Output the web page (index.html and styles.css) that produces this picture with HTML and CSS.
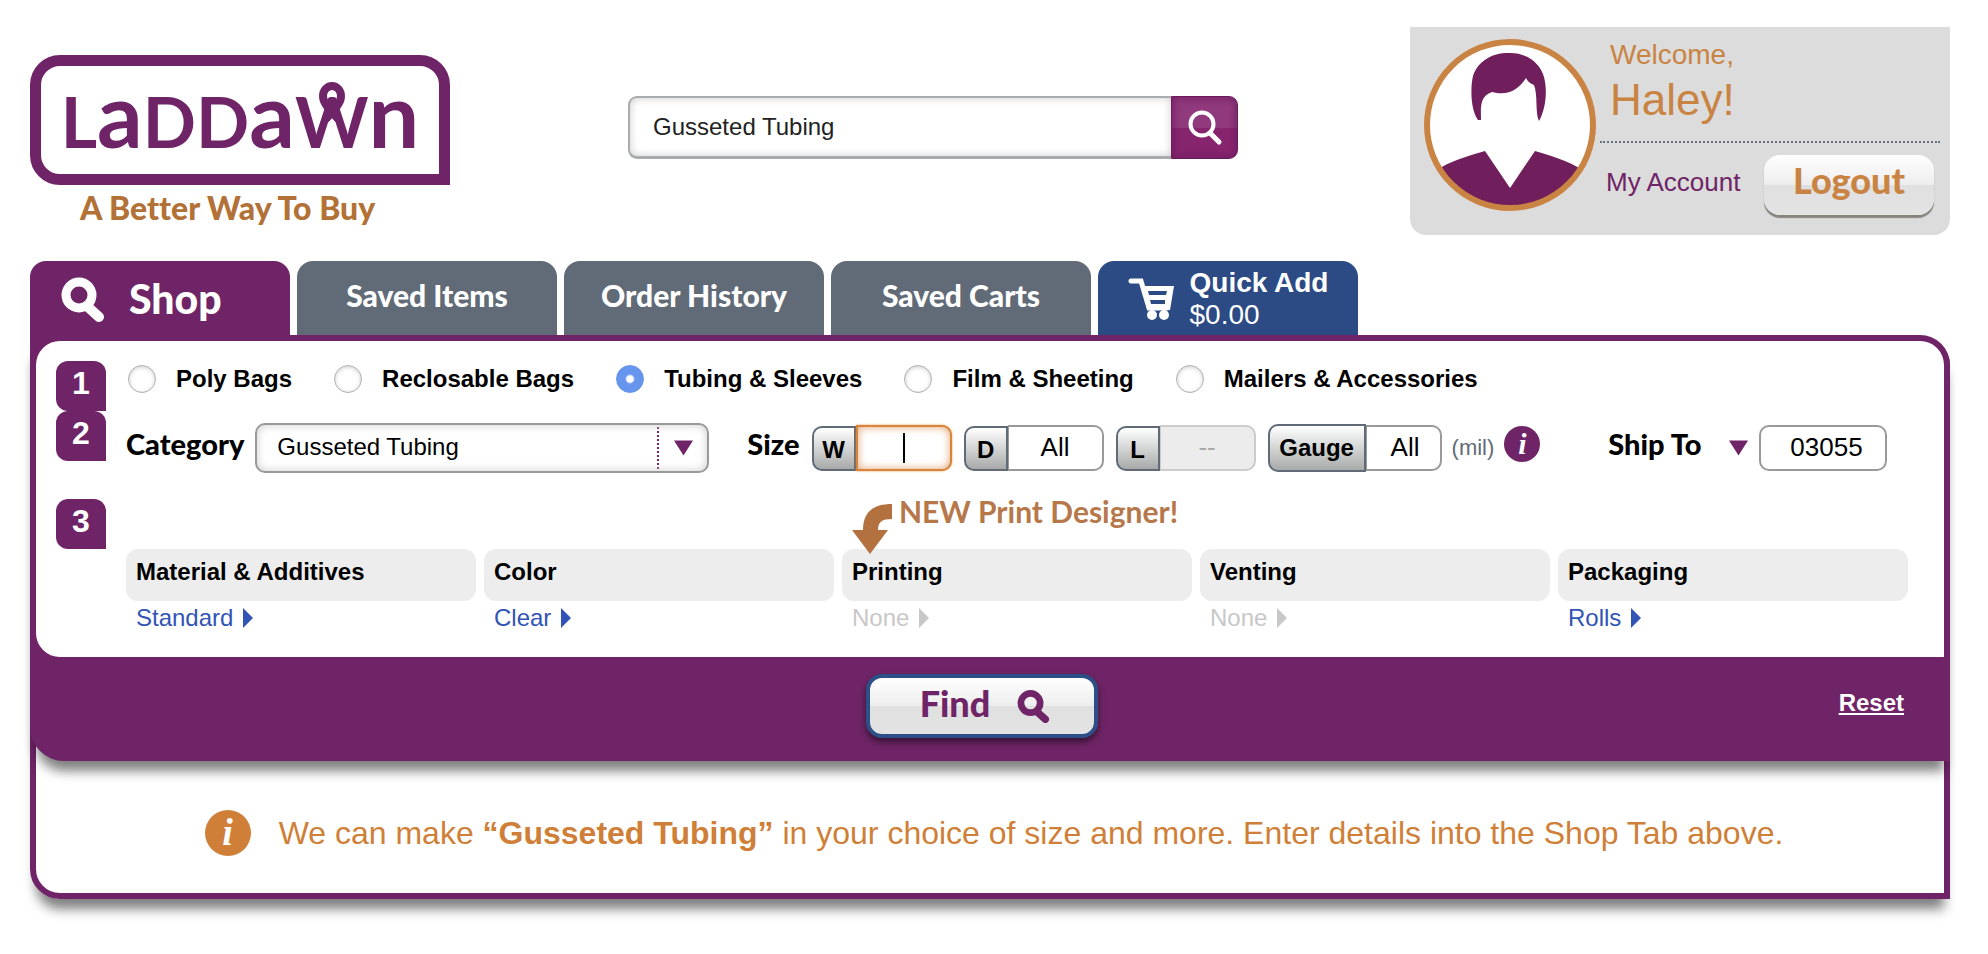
FILE: index.html
```html
<!DOCTYPE html>
<html lang="en">
<head>
<meta charset="utf-8">
<title>Laddawn - Shop</title>
<link rel="stylesheet" href="styles.css">
</head>
<body>
<svg class="defs" aria-hidden="true">
  <symbol id="glass" viewBox="0 0 44 46">
    <circle cx="18" cy="19" r="13" fill="none" stroke="currentColor" stroke-width="9"/>
    <path d="M27 31 L38 41" stroke="currentColor" stroke-width="10" stroke-linecap="round"/>
  </symbol>
  <symbol id="down" viewBox="0 0 20 16"><path d="M0 0H20L10 16Z" fill="currentColor"/></symbol>
  <symbol id="right" viewBox="0 0 10 20"><path d="M0 0L10 10L0 20Z" fill="currentColor"/></symbol>
</svg>

<header class="header">
  <div class="brand">
    <a class="logo" href="#" aria-label="Laddawn home">
      <span class="word">L<span class="low">a</span>DD<span class="low">a</span><span class="loop-letter">W<svg class="loop" viewBox="0 0 28 40"><path d="M7 38 C20 24 23 20 23 14 A9 10 0 0 0 5 14 C5 20 8 24 21 38" fill="none" stroke="currentColor" stroke-width="8"/></svg></span><span class="low">n</span></span>
    </a>
    <p class="tagline">A Better Way To Buy</p>
  </div>
  <form class="search">
    <input class="search-input" type="text" value="Gusseted Tubing" aria-label="Search">
    <button class="search-button" type="button" aria-label="Search">
      <svg viewBox="0 0 36 36" width="36" height="36"><circle cx="15" cy="14" r="11.500" fill="none" stroke="#fff" stroke-width="4"/><path d="M23 23L32 32" stroke="#fff" stroke-width="5" stroke-linecap="round"/></svg>
    </button>
  </form>
  <section class="user">
    <svg class="avatar" viewBox="0 0 172 172">
      <circle cx="86" cy="86" r="83" fill="#fff"/>
      <clipPath id="face"><circle cx="86" cy="86" r="81"/></clipPath>
      <path clip-path="url(#face)" fill="#701f5c" d="M14 131 Q22 123 61 112 L86 149 L111 112 Q146 122 158 131 V172 H14Z"/>
      <path fill="#701f5c" d="M54 81 C47 72 46 50 49 37 C54 22 68 14 84 14 C101 13 116 23 120 38 C124 54 121 71 115 82 C111 74 114 56 110 46 C106 44 104 43 102 39 C94 51 84 57 68 53 C55 57 57 70 57 81Z"/>
      <circle cx="86" cy="86" r="83" fill="none" stroke="#c98444" stroke-width="6"/>
    </svg>
    <div class="user-info">
      <p class="welcome">Welcome,</p>
      <p class="name">Haley!</p>
      <div class="user-actions">
        <a class="account" href="#">My Account</a>
        <button class="logout" type="button">Logout</button>
      </div>
    </div>
  </section>
</header>

<nav class="tabs">
  <a class="tab tab-shop" href="#"><svg class="shop-icon"><use href="#glass"/></svg>Shop</a>
  <a class="tab" href="#">Saved Items</a>
  <a class="tab" href="#">Order History</a>
  <a class="tab" href="#">Saved Carts</a>
  <a class="tab tab-cart" href="#">
    <svg viewBox="0 0 46 42" width="46" height="42"><path d="M3 3H13L21 30H39" fill="none" stroke="#fff" stroke-width="5" stroke-linecap="round"/><path fill="#fff" fill-rule="evenodd" d="M13 8H46L42 32H20ZM20 13L21 17H38L39 13ZM22 22L23 26H37V22Z"/><circle cx="24" cy="37" r="5" fill="#fff"/><circle cx="36" cy="37" r="5" fill="#fff"/></svg>
    <span class="cart-text"><b>Quick Add</b><span>$0.00</span></span>
  </a>
</nav>

<main class="shell">
  <form class="shop">
    <div class="steps">
      <div class="step">
        <span class="badge">1</span>
        <div class="kinds">
          <label class="kind"><input type="radio" name="kind">Poly Bags</label>
          <label class="kind"><input type="radio" name="kind">Reclosable Bags</label>
          <label class="kind"><input type="radio" name="kind" checked>Tubing &amp; Sleeves</label>
          <label class="kind"><input type="radio" name="kind">Film &amp; Sheeting</label>
          <label class="kind"><input type="radio" name="kind">Mailers &amp; Accessories</label>
        </div>
      </div>
      <div class="step step-size">
        <span class="badge">2</span>
        <div class="fields">
          <label class="title" for="category">Category</label>
          <div class="select">
            <select id="category"><option>Gusseted Tubing</option></select>
            <svg class="arrow"><use href="#down"/></svg>
          </div>
          <span class="title title-size">Size</span>
          <div class="pair"><label for="w">W</label><input class="active" id="w" type="text"></div>
          <div class="pair"><label for="d">D</label><input id="d" type="text" value="All"></div>
          <div class="pair"><label for="l">L</label><input id="l" type="text" value="--" disabled></div>
          <div class="pair gauge"><label for="g">Gauge</label><input id="g" type="text" value="All"></div>
          <span class="unit">(mil)</span>
          <button class="info" type="button" aria-label="Gauge information">i</button>
          <label class="title title-ship" for="zip">Ship To</label>
          <svg class="arrow"><use href="#down"/></svg>
          <input class="zip" id="zip" type="text" value="03055">
        </div>
      </div>
      <div class="step">
        <span class="badge">3</span>
        <div class="options">
          <div class="option"><h2>Material &amp; Additives</h2><a href="#">Standard<svg><use href="#right"/></svg></a></div>
          <div class="option"><h2>Color</h2><a href="#">Clear<svg><use href="#right"/></svg></a></div>
          <div class="option">
            <div class="designer">
              <svg viewBox="0 0 40 50" width="40" height="50"><path fill="#b37140" d="M40 0V15C30 15 26 18 26 26H36L18 50L0 26H11C11 9 20 0 40 0Z"/></svg>
              <span>NEW Print Designer!</span>
            </div>
            <h2>Printing</h2><a class="none" href="#">None<svg><use href="#right"/></svg></a>
          </div>
          <div class="option"><h2>Venting</h2><a class="none" href="#">None<svg><use href="#right"/></svg></a></div>
          <div class="option"><h2>Packaging</h2><a href="#">Rolls<svg><use href="#right"/></svg></a></div>
        </div>
      </div>
    </div>
    <div class="find-bar">
      <button class="find" type="button">Find<svg class="find-icon"><use href="#glass"/></svg></button>
      <a class="reset" href="#">Reset</a>
    </div>
  </form>
  <p class="message">
    <span class="message-icon">i</span>
    <span>We can make <b>“Gusseted Tubing”</b> in your choice of size and more. Enter details into the Shop Tab above.</span>
  </p>
</main>
</body>
</html>
```

FILE: styles.css
```css
:root {
  --purple: #6e2466;
  --orange: #c98444;
  --slate: #616b77;
  --blue: #2c4b84;
  --sans: "Liberation Sans", Arial, sans-serif;
  --display: Lato, "Open Sans", sans-serif;
}
* { box-sizing: border-box; }
body {
  margin: 0;
  padding: 27px 38px 40px 30px;
  background: #fff;
  color: #000;
  font: 24px/28px var(--sans);
}
p, h2 { margin: 0; }
a { color: inherit; text-decoration: none; }
input, select, button { margin: 0; font: inherit; color: inherit; }
.defs { display: none; }

/* Header */
.header { display: grid; grid-template-columns: 420px 1fr 540px; align-items: start; }
.brand { padding-top: 28px; }
.logo {
  display: flex;
  align-items: center;
  justify-content: center;
  height: 130px;
  padding-bottom: 6px;
  border: 11px solid var(--purple);
  border-radius: 30px 30px 0 30px;
  color: var(--purple);
}
.word { font: 700 70px/100px var(--display); white-space: nowrap; }
.low { font-size: 90px; }
.loop-letter { position: relative; }
.loop { position: absolute; left: 50%; top: 3px; width: 28px; height: 40px; margin-left: -14px; }
.tagline {
  padding-left: 50px;
  color: #b27136;
  font: 900 32px/46px var(--display);
  font-variant-ligatures: none;
}
.search { display: flex; justify-self: center; width: 610px; margin: 69px 0 0 6px; }
.search-input {
  flex: 1;
  min-width: 0;
  height: 63px;
  padding: 0 23px;
  border: 2px solid #a9abac;
  border-right: 0;
  border-bottom-width: 3px;
  border-radius: 9px 0 0 9px;
  box-shadow: inset 0 0 8px #ccc;
  color: #222;
}
.search-button {
  display: grid;
  place-items: center;
  width: 67px;
  height: 63px;
  padding: 0;
  border: 1px solid #6c1c5c;
  border-radius: 0 9px 9px 0;
  background: linear-gradient(#91397d 50%, #86246e 50%);
  box-shadow: inset 0 0 8px #6c1c5c;
}
.user {
  display: flex;
  gap: 4px;
  height: 208px;
  padding: 12px 10px 0 14px;
  border-radius: 0 0 16px 16px;
  background: #dcdcdc;
  color: var(--orange);
}
.avatar { flex: none; width: 172px; height: 172px; }
.user-info { flex: 1; }
.welcome { padding-left: 10px; font-size: 28px; line-height: 32px; }
.name { height: 70px; padding: 4px 0 0 10px; font-size: 44px; line-height: 50px; }
.user-actions {
  display: flex;
  align-items: center;
  justify-content: space-between;
  padding: 12px 6px 0 6px;
  border-top: 2px dotted #66727f;
}
.account { color: var(--purple); font-size: 26px; line-height: 30px; padding-bottom: 6px; }
.logout {
  width: 170px;
  height: 60px;
  padding: 0 0 10px;
  border: 0;
  border-radius: 16px;
  background: linear-gradient(#fff, #eeedee 50%, #e0e0e0 50%, #e3e3e3);
  box-shadow: 0 3px 1px #85847f;
  font: 900 36px/48px var(--display);
}

/* Tabs */
.tabs { display: flex; gap: 7px; margin-top: 26px; }
.tab {
  display: flex;
  align-items: center;
  justify-content: center;
  width: 260px;
  height: 74px;
  padding-bottom: 6px;
  border-radius: 16px 16px 0 0;
  background: var(--slate);
  color: #fff;
  font: 900 30px/40px var(--display);
  white-space: nowrap;
}
.tab-shop { justify-content: flex-start; gap: 24px; padding: 2px 0 0 31px; background: var(--purple); font-size: 41px; }
.shop-icon { width: 44px; height: 46px; }
.tab-cart { gap: 16px; padding: 2px 0 0; background: var(--blue); font: 28px/32px var(--sans); }
.cart-text { display: grid; }

/* Shop panel */
.shell {
  border: 6px solid var(--purple);
  border-radius: 0 30px 0 30px;
  box-shadow: 0 16px 12px -6px rgba(0, 0, 0, .5);
}
.shop {
  margin: 0 -6px;
  border-radius: 0 24px 0 34px;
  background: var(--purple);
  box-shadow: 0 16px 12px -6px rgba(0, 0, 0, .5);
}
.steps {
  min-height: 316px;
  margin: 0 6px;
  padding: 20px 36px 24px 20px;
  border-radius: 24px 24px 0 24px;
  background: #fff;
}
.step { display: grid; grid-template-columns: 50px 1fr; column-gap: 20px; align-items: start; }
.badge {
  height: 50px;
  border-radius: 12px 12px 0 12px;
  background: var(--purple);
  color: #fff;
  font-size: 32px;
  font-weight: 700;
  line-height: 44px;
  text-align: center;
}
.kinds { display: flex; gap: 42px; padding: 4px 0 0 2px; }
.kind { display: flex; align-items: center; gap: 20px; font-weight: 700; white-space: nowrap; }
.kind input {
  appearance: none;
  width: 28px;
  height: 28px;
  border: 1px solid #b0b0b0;
  border-radius: 50%;
  box-shadow: inset 0 1px 4px #ccc;
}
.kind input:checked {
  border-color: #6595ec;
  background: radial-gradient(circle, #fff 3px, #6595ec 5px);
  box-shadow: none;
}
.step-size { min-height: 88px; }
.fields { display: flex; align-items: center; padding-top: 12px; }
.title { padding-bottom: 8px; font: 900 29px/40px var(--display); white-space: nowrap; }
.title-size { margin: 0 12px 0 38px; }
.title-ship { margin: 0 28px 0 68px; }
.select { display: grid; flex: 0 1 454px; align-items: center; margin-left: 11px; }
.select select {
  grid-area: 1 / 1;
  appearance: none;
  height: 50px;
  padding: 0 60px 2px 20px;
  border: 2px solid #999;
  border-radius: 10px;
  background: repeating-linear-gradient(var(--purple) 0 2px, #fff 2px 4px) right 48px center / 2px 42px no-repeat #fff;
  box-shadow: inset 0 0 10px #ccc;
}
.arrow { width: 19px; height: 16px; color: var(--purple); }
.select .arrow { grid-area: 1 / 1; justify-self: end; margin-right: 16px; pointer-events: none; }
.pair { display: flex; align-items: center; margin-right: 12px; }
.pair label {
  width: 44px;
  height: 45px;
  border: 2px solid #616b77;
  border-radius: 10px 0 0 10px;
  background: linear-gradient(#fff, #a8aaaa);
  font-weight: 700;
  line-height: 44px;
  text-align: center;
}
.pair input, .zip {
  width: 96px;
  height: 46px;
  padding: 0 0 2px;
  border: 2px solid #999;
  border-radius: 0 10px 10px 0;
  background: #fff;
  font-size: 26px;
  text-align: center;
}
.pair input { border-left-width: 1px; }
.pair input.active {
  border: 2px solid #d8853a;
  background: linear-gradient(#000, #000) center / 2px 30px no-repeat #fff;
  box-shadow: inset 0 0 8px #e0a070, 0 0 2px #d8853a;
}
.pair input:disabled { border-color: #ccc; background: #ececec; color: #aaa; }
.gauge { margin-right: 10px; }
.gauge label { width: 98px; height: 48px; }
.gauge input { width: 76px; padding-left: 4px; }
.unit { color: var(--slate); font-size: 22px; }
.info {
  width: 36px;
  height: 36px;
  margin: 0 0 8px 10px;
  padding: 0;
  border: 0;
  border-radius: 50%;
  background: var(--purple);
  color: #fff;
  font: italic 700 30px/34px "Liberation Serif", serif;
}
.zip { width: 128px; margin-left: 11px; padding-left: 6px; border-radius: 10px; }

.options { display: grid; grid-template-columns: repeat(5, 1fr); gap: 8px; padding-top: 50px; }
.option { position: relative; }
.option h2 {
  height: 52px;
  padding-left: 10px;
  border-radius: 12px;
  background: #ededed;
  font-size: 24px;
  line-height: 46px;
}
.option a { display: inline-flex; align-items: center; gap: 10px; padding: 3px 0 0 10px; color: #3154b5; }
.option a svg { width: 10px; height: 20px; }
.option a.none { color: #c8c8c8; }
.designer { position: absolute; left: 10px; top: -56px; display: flex; gap: 7px; color: #b6784a; }
.designer svg { margin-top: 11px; }
.designer span { font: 700 30px/36px var(--display); white-space: nowrap; }

.find-bar {
  display: grid;
  grid-template-columns: 1fr auto 1fr;
  align-items: center;
  height: 104px;
  padding: 0 46px 0 30px;
}
.find {
  grid-column: 2;
  display: flex;
  align-items: center;
  justify-content: center;
  gap: 27px;
  width: 232px;
  height: 64px;
  margin-bottom: 6px;
  padding: 0 0 6px 6px;
  border: 4px solid #2b4f86;
  border-radius: 16px;
  background: linear-gradient(#fff, #ededed 50%, #e0e0e0 50%, #e3e3e3);
  box-shadow: 0 4px 6px rgba(0, 0, 0, .5);
  color: var(--purple);
  font: 900 36px/48px var(--display);
}
.find-icon { width: 33px; height: 34px; margin-top: 6px; }
.reset { justify-self: end; margin-bottom: 12px; color: #fff; font-weight: 700; text-decoration: underline; }

.message {
  display: flex;
  align-items: center;
  justify-content: center;
  gap: 28px;
  height: 132px;
  padding: 11px 0 0 8px;
  color: #cf7f37;
  font-size: 32px;
  line-height: 40px;
}
.message-icon {
  flex: none;
  width: 46px;
  height: 46px;
  border-radius: 50%;
  background: #cf7f37;
  color: #fff;
  font: italic 700 38px/44px "Liberation Serif", serif;
  text-align: center;
}
```
